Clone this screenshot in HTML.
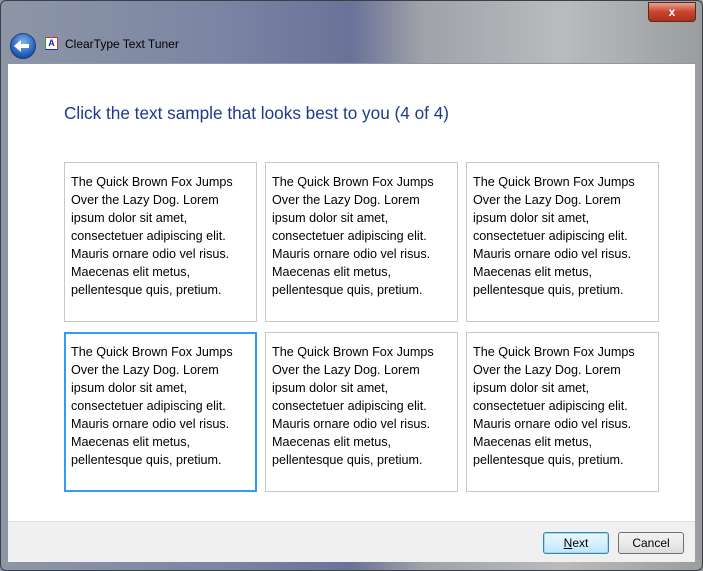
<!DOCTYPE html>
<html><head><style>
body{margin:0;width:703px;height:571px;overflow:hidden;font-family:"Liberation Sans",sans-serif;background:#8a8f9c;position:relative}
.bg{position:absolute;inset:0;background:linear-gradient(90deg,#8d96a6 0%,#7c86a4 30%,#6a7299 50%,#9fa2a8 60%,#b9bbbd 80%,#9a9c9e 100%)}
.frame{position:absolute;left:0;top:0;width:701px;height:569px;border:1px solid #3a3f48;border-radius:6px}
.close{position:absolute;left:648px;top:2px;width:46px;height:18px;background:linear-gradient(#e8a090,#c8432c 50%,#b0301a);border:1px solid #5a2a20;border-radius:0 0 4px 4px;color:#fff;font-weight:bold;font-size:12px;text-align:center;line-height:18px}
.back{position:absolute;left:10px;top:33px;width:24px;height:24px;border-radius:50%;background:radial-gradient(circle at 50% 35%,#7fb4f0,#1a56b8 70%,#0d3580);border:1px solid #23406e}
.back:after{content:"";position:absolute;left:5px;top:10px;width:13px;height:4px;background:#fff}
.back:before{content:"";position:absolute;left:3px;top:6px;border:6px solid transparent;border-right:7px solid #fff;border-left:0}
.ico{position:absolute;left:45px;top:37px;width:11px;height:11px;background:#fff;border:1px solid #c33;border-left-color:#2a2;border-bottom-color:#22c;font-size:9px;line-height:11px;text-align:center;color:#22a;font-weight:bold}
.tt{position:absolute;left:65px;top:37px;font-size:12px;color:#000}
.content{position:absolute;left:8px;top:63px;width:687px;height:458px;background:#fff;border-top:1px solid #8899aa}
.foot{position:absolute;left:8px;top:521px;width:687px;height:40px;background:#f0f0f0;border-top:1px solid #dfdfdf}
h1{position:absolute;left:64px;top:103px;margin:0;font-weight:normal;font-size:17.2px;color:#1e3a8c}
.box{position:absolute;width:193px;height:160px;border:1px solid #c8c8c8;box-sizing:border-box;padding:10px 0 0 6px;font-size:12.6px;line-height:18px;color:#000;white-space:nowrap}
.sel{border:2px solid #3399ff;padding:9px 0 0 5px}
.btn{position:absolute;top:532px;width:64px;height:20px;border:1px solid #707070;border-radius:3px;background:linear-gradient(#f2f2f2,#ebebeb 50%,#dcdcdc);font-size:12px;text-align:center;line-height:20px}
.nx{left:543px;border-color:#3c7fb1;background:linear-gradient(#eaf6fd,#d9f0fc 50%,#bee6fd);box-shadow:inset 0 0 0 1px #9fd8f8}
</style></head><body>
<div class="bg"></div>
<div class="frame"></div>
<div class="close">x</div>
<div class="back"></div>
<div class="ico">A</div>
<div class="tt">ClearType Text Tuner</div>
<div class="content"></div>
<div class="foot"></div>
<h1>Click the text sample that looks best to you (4 of 4)</h1>
<div class="box" style="left:64px;top:162px">The Quick Brown Fox Jumps<br>Over the Lazy Dog. Lorem<br>ipsum dolor sit amet,<br>consectetuer adipiscing elit.<br>Mauris ornare odio vel risus.<br>Maecenas elit metus,<br>pellentesque quis, pretium.</div>
<div class="box" style="left:265px;top:162px">The Quick Brown Fox Jumps<br>Over the Lazy Dog. Lorem<br>ipsum dolor sit amet,<br>consectetuer adipiscing elit.<br>Mauris ornare odio vel risus.<br>Maecenas elit metus,<br>pellentesque quis, pretium.</div>
<div class="box" style="left:466px;top:162px">The Quick Brown Fox Jumps<br>Over the Lazy Dog. Lorem<br>ipsum dolor sit amet,<br>consectetuer adipiscing elit.<br>Mauris ornare odio vel risus.<br>Maecenas elit metus,<br>pellentesque quis, pretium.</div>
<div class="box sel" style="left:64px;top:332px">The Quick Brown Fox Jumps<br>Over the Lazy Dog. Lorem<br>ipsum dolor sit amet,<br>consectetuer adipiscing elit.<br>Mauris ornare odio vel risus.<br>Maecenas elit metus,<br>pellentesque quis, pretium.</div>
<div class="box" style="left:265px;top:332px">The Quick Brown Fox Jumps<br>Over the Lazy Dog. Lorem<br>ipsum dolor sit amet,<br>consectetuer adipiscing elit.<br>Mauris ornare odio vel risus.<br>Maecenas elit metus,<br>pellentesque quis, pretium.</div>
<div class="box" style="left:466px;top:332px">The Quick Brown Fox Jumps<br>Over the Lazy Dog. Lorem<br>ipsum dolor sit amet,<br>consectetuer adipiscing elit.<br>Mauris ornare odio vel risus.<br>Maecenas elit metus,<br>pellentesque quis, pretium.</div>
<div class="btn nx"><u>N</u>ext</div>
<div class="btn" style="left:618px">Cancel</div>
</body></html>
